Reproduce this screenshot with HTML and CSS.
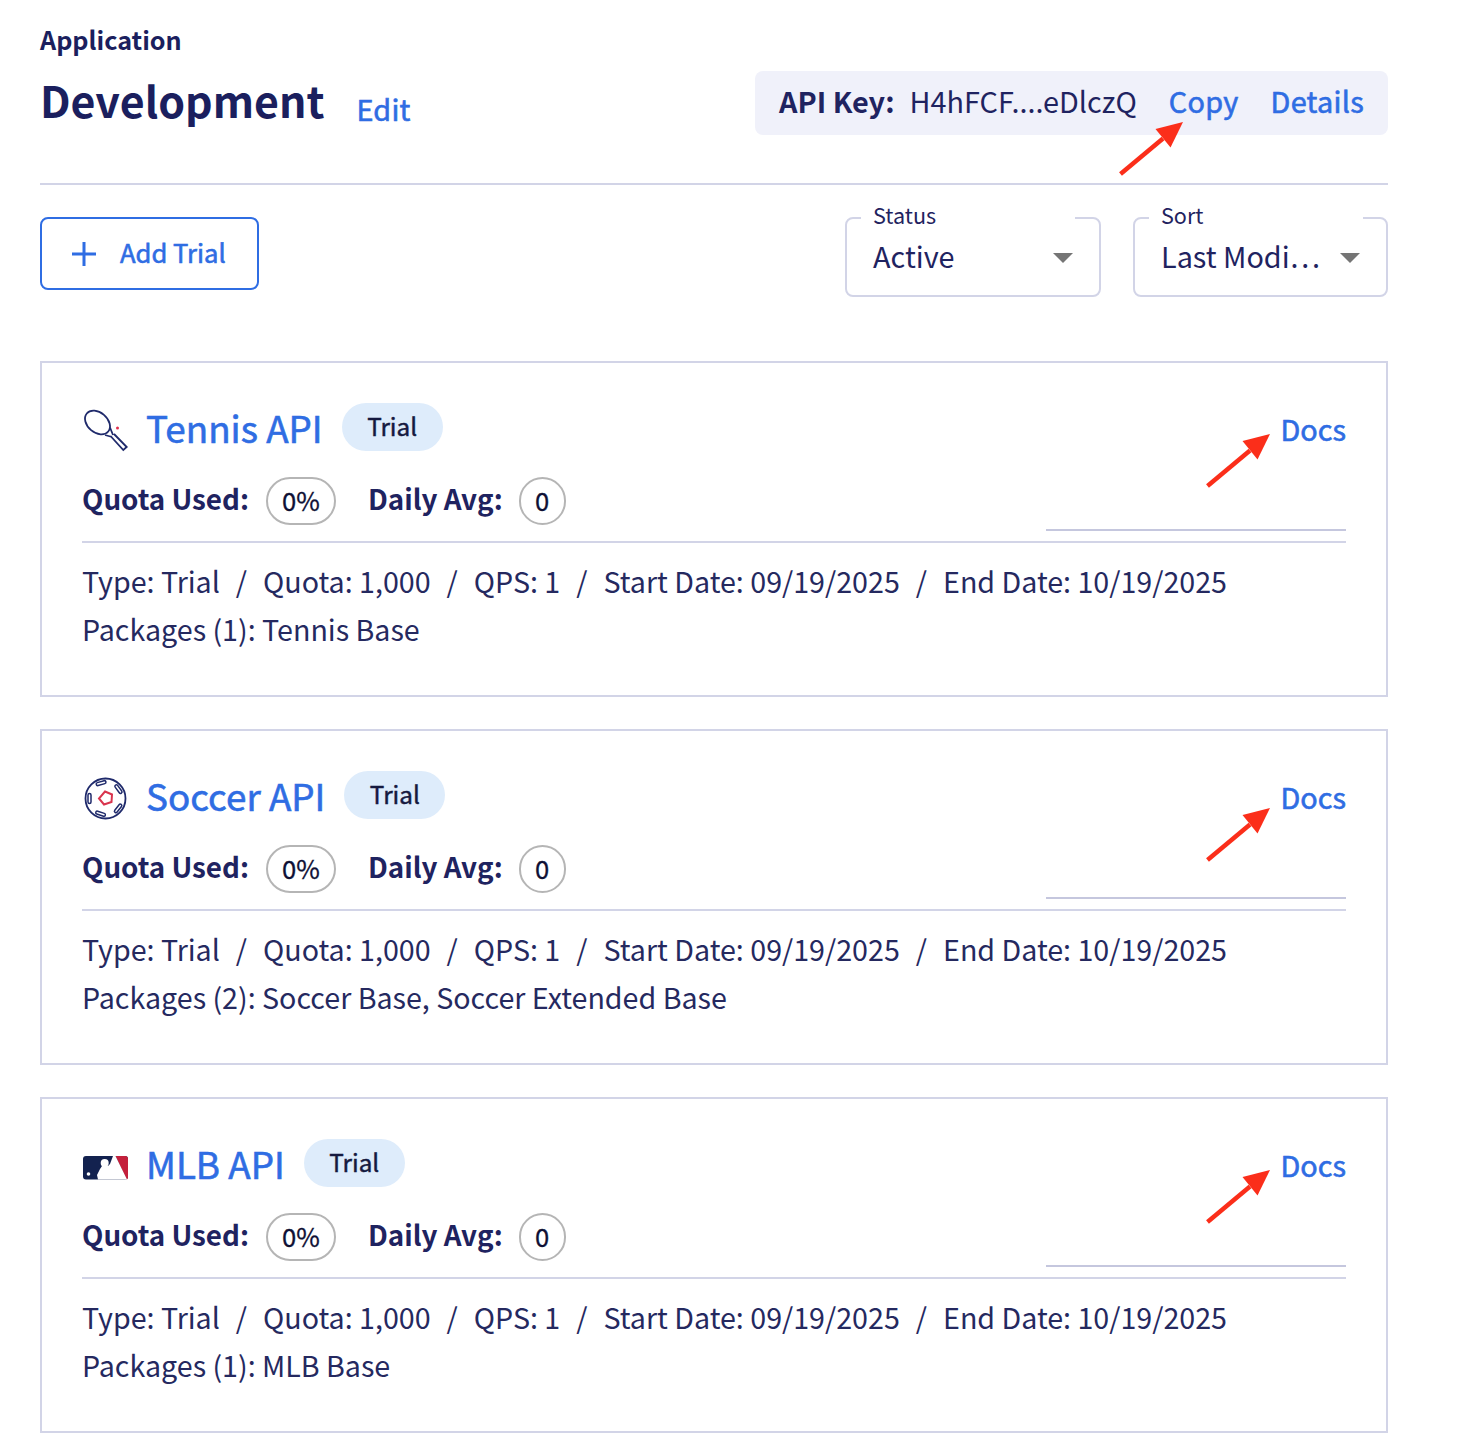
FILE: index.html
```html
<!DOCTYPE html>
<html lang="en">
<head>
<meta charset="utf-8">
<title>Application - Development</title>
<link rel="stylesheet" href="styles.css">
</head>
<body>
<main class="page">
  <header class="app-header">
    <div class="app-title">
      <div class="eyebrow">Application</div>
      <div class="name-row">
        <h1 class="app-name">Development</h1>
        <a class="edit-link">Edit</a>
      </div>
    </div>
    <div class="key-box">
      <span class="key-label">API Key:</span>
      <span class="key-value">H4hFCF....eDlczQ</span>
      <a class="key-link key-copy">Copy</a>
      <a class="key-link">Details</a>
      <svg class="arrow arrow-copy" width="70" height="60" viewBox="0 0 70 60"><path d="M3.5 56 L46 20.500" class="arrow-shaft"/><path d="M66 4 L38.500 11 L53.500 29.500 Z" class="arrow-head"/></svg>
    </div>
  </header>

  <section class="toolbar">
    <button class="add-btn">
      <svg width="26" height="26" viewBox="0 0 26 26"><path d="M13 1V25M1 13H25" class="plus"/></svg>
      <span>Add Trial</span>
    </button>
    <div class="filters">
      <div class="select select-status">
        <span class="select-label">Status</span>
        <span class="select-value">Active</span>
        <span class="caret"></span>
      </div>
      <div class="select select-sort">
        <span class="select-label">Sort</span>
        <span class="select-value">Last Modi…</span>
        <span class="caret"></span>
      </div>
    </div>
  </section>

  <section class="cards">
    <article class="card">
      <div class="card-head">
        <div class="card-main">
          <div class="title-row">
            <svg class="sport-icon" width="46" height="46" viewBox="0 0 46 46">
              <g transform="translate(0 3)">
                <g class="navy-line"><ellipse cx="15.500" cy="12.500" rx="14" ry="10" transform="rotate(40 15.500 12.500)"/><path d="M23 25 L30 27 M28 17.500 L31 25 M28.500 26 L41.300 40 L44.700 37 L32 24"/></g>
                <circle cx="35.500" cy="18" r="1.500" class="red-fill"/>
              </g>
            </svg>
            <a class="api-name">Tennis API</a>
            <span class="badge">Trial</span>
          </div>
          <div class="stats">
            <span class="stat-label">Quota Used:</span><span class="chip chip-pct">0%</span>
            <span class="stat-label stat-second">Daily Avg:</span><span class="chip chip-num">0</span>
          </div>
        </div>
        <div class="docs-col">
          <a class="docs">Docs</a>
          <svg class="arrow arrow-docs" width="70" height="60" viewBox="0 0 70 60"><path d="M3.500 56 L46 20.500" class="arrow-shaft"/><path d="M66 4 L38.500 11 L53.500 29.500 Z" class="arrow-head"/></svg>
        </div>
      </div>
      <div class="details">
        <p>Type: Trial<i>/</i>Quota: 1,000<i>/</i>QPS: 1<i>/</i>Start Date: 09/19/2025<i>/</i>End Date: 10/19/2025</p>
        <p>Packages (1): Tennis Base</p>
      </div>
    </article>

    <article class="card">
      <div class="card-head">
        <div class="card-main">
          <div class="title-row">
            <svg class="sport-icon" width="46" height="46" viewBox="0 0 46 46">
              <circle cx="23.500" cy="23.500" r="20" class="navy-line"/>
              <g class="navy-line panel">
                <rect x="14.500" y="-5" width="3" height="10" rx="1.500" transform="translate(23.500 23.500) rotate(-106)"/>
                <rect x="14.500" y="-5" width="3" height="10" rx="1.500" transform="translate(23.500 23.500) rotate(-36)"/>
                <rect x="14.500" y="-5" width="3" height="10" rx="1.500" transform="translate(23.500 23.500) rotate(38)"/>
                <rect x="14.500" y="-5" width="3" height="10" rx="1.500" transform="translate(23.500 23.500) rotate(108)"/>
                <rect x="14.500" y="-5" width="3" height="10" rx="1.500" transform="translate(23.500 23.500) rotate(180)"/>
              </g>
              <path d="M23 16.500 L30 19.500 L29.500 27 L22 29.500 L17 23.500 Z" class="red-line"/>
            </svg>
            <a class="api-name">Soccer API</a>
            <span class="badge">Trial</span>
          </div>
          <div class="stats">
            <span class="stat-label">Quota Used:</span><span class="chip chip-pct">0%</span>
            <span class="stat-label stat-second">Daily Avg:</span><span class="chip chip-num">0</span>
          </div>
        </div>
        <div class="docs-col">
          <a class="docs">Docs</a>
          <svg class="arrow arrow-docs arrow-low" width="70" height="60" viewBox="0 0 70 60"><path d="M3.500 56 L46 20.500" class="arrow-shaft"/><path d="M66 4 L38.500 11 L53.500 29.500 Z" class="arrow-head"/></svg>
        </div>
      </div>
      <div class="details">
        <p>Type: Trial<i>/</i>Quota: 1,000<i>/</i>QPS: 1<i>/</i>Start Date: 09/19/2025<i>/</i>End Date: 10/19/2025</p>
        <p>Packages (2): Soccer Base, Soccer Extended Base</p>
      </div>
    </article>

    <article class="card">
      <div class="card-head">
        <div class="card-main">
          <div class="title-row">
            <svg class="sport-icon" width="46" height="46" viewBox="0 0 46 46">
              <g transform="translate(1 13)">
                <rect width="45" height="23.500" rx="3" class="mlb-navy"/>
                <path d="M32.500 0 H42 Q45 0 45 3 V20.500 Q45 23 43.500 23.500 Z" class="mlb-red"/>
                <path d="M30 0 H32.500 L44 23.500 H15 L14 19 L17 13 L19 10 H25 L27 8 Z" class="mlb-white"/>
                <circle cx="21.700" cy="7" r="4" class="mlb-white"/>
                <circle cx="5.500" cy="18" r="1.800" class="mlb-white"/>
              </g>
            </svg>
            <a class="api-name">MLB API</a>
            <span class="badge">Trial</span>
          </div>
          <div class="stats">
            <span class="stat-label">Quota Used:</span><span class="chip chip-pct">0%</span>
            <span class="stat-label stat-second">Daily Avg:</span><span class="chip chip-num">0</span>
          </div>
        </div>
        <div class="docs-col">
          <a class="docs">Docs</a>
          <svg class="arrow arrow-docs" width="70" height="60" viewBox="0 0 70 60"><path d="M3.500 56 L46 20.500" class="arrow-shaft"/><path d="M66 4 L38.500 11 L53.500 29.500 Z" class="arrow-head"/></svg>
        </div>
      </div>
      <div class="details">
        <p>Type: Trial<i>/</i>Quota: 1,000<i>/</i>QPS: 1<i>/</i>Start Date: 09/19/2025<i>/</i>End Date: 10/19/2025</p>
        <p>Packages (1): MLB Base</p>
      </div>
    </article>
  </section>
</main>
</body>
</html>
```
FILE: styles.css
```css
* { box-sizing: border-box; }
html, body { margin: 0; padding: 0; background: #fff; }
body {
  font-family: "Noto Sans CJK JP", "Noto Sans", sans-serif;
  color: #1f2360;
}
a { color: #2f6de3; -webkit-text-stroke: 0.6px #2f6de3; }
.page { width: 1348px; margin-left: 40px; padding-top: 20px; }

.app-header {
  display: flex;
  justify-content: space-between;
  align-items: flex-start;
  height: 165px;
  border-bottom: 2px solid #d2d4e7;
}
.eyebrow { font-size: 25.200px; line-height: 38px; font-weight: 700; color: #1b1f5e; }
.name-row { display: flex; align-items: flex-start; margin-top: 9px; }
.app-name { margin: 0; font-size: 42.900px; line-height: 64px; font-weight: 700; color: #1b1f5e; }
.edit-link { margin: 22px 0 0 32px; font-size: 28.800px; line-height: 40px; letter-spacing: 0.25px; }

.key-box {
  position: relative;
  margin-top: 51px;
  width: 633px;
  height: 64px;
  padding: 0 24px 4px;
  display: flex;
  align-items: center;
  background: #f0f1fa;
  border-radius: 8px;
  font-size: 28.800px;
  line-height: 40px;
  white-space: nowrap;
}
.key-label { font-weight: 700; }
.key-value { margin-left: 15px; }
.key-link { margin-left: 32px; letter-spacing: 0.3px; }
.arrow { position: absolute; overflow: visible; }
.arrow-copy { left: 362px; top: 47px; }
.arrow-shaft { stroke: #fb2e1a; stroke-width: 4.500; fill: none; }
.arrow-head { fill: #fb2e1a; }

.toolbar {
  display: flex;
  justify-content: space-between;
  align-items: flex-start;
  margin-top: 32px;
}
.add-btn {
  width: 219px;
  height: 73px;
  display: flex;
  align-items: center;
  gap: 23px;
  padding: 0 0 5px 29px;
  background: #fff;
  border: 2px solid #2f6de3;
  border-radius: 8px;
  font-family: inherit;
  font-size: 25.600px;
  -webkit-text-stroke: 0.6px #2f6de3;
  color: #2f6de3;
}
.add-btn svg { margin-top: 5px; }
.plus { stroke: #2f6de3; stroke-width: 3; fill: none; }
.filters { display: flex; gap: 32px; }
.select {
  position: relative;
  height: 80px;
  border: 2px solid #d2d4e7;
  border-radius: 8px;
  padding: 17px 0 0 26px;
}
.select-status { width: 256px; }
.select-sort { width: 255px; }
.select-label {
  position: absolute;
  left: 14px;
  top: -16px;
  width: 214px;
  padding-left: 12px;
  font-size: 21.600px;
  line-height: 24px;
  background: linear-gradient(#fff 0 16px, transparent 16px);
}
.select-value { font-size: 28.800px; line-height: 40px; display: block; }
.caret {
  position: absolute;
  right: 26px;
  top: 34px;
  border-left: 10px solid transparent;
  border-right: 10px solid transparent;
  border-top: 10px solid #757575;
}

.cards { display: flex; flex-direction: column; gap: 32px; margin-top: 64px; }
.card {
  height: 336px;
  border: 2px solid #d2d4e7;
  padding: 40px 40px 0;
}
.card-head {
  display: flex;
  justify-content: space-between;
  height: 140px;
  border-bottom: 2px solid #d2d4e7;
}
.title-row { display: flex; height: 48px; align-items: flex-start; }
.sport-icon { margin-top: 4px; flex: none; }
.navy-line { fill: none; stroke: #1f2a6b; stroke-width: 1.800; }
.navy-line.panel { fill: #fff; stroke-width: 1.500; }
.red-line { fill: none; stroke: #d9344d; stroke-width: 2; }
.red-fill { fill: #e2304d; }
.mlb-navy { fill: #13224f; }
.mlb-red { fill: #c4203c; }
.mlb-white { fill: #fff; }
.api-name { margin: -1px 19px 0 18px; font-size: 36.800px; line-height: 50px; white-space: nowrap; }
.badge {
  width: 101px;
  height: 48px;
  border-radius: 24px;
  background: #deecfb;
  color: #15193f;
  font-size: 24.300px;
  -webkit-text-stroke: 0.45px #15193f;
  line-height: 46px;
  text-align: center;
}
.stats { display: flex; align-items: center; margin-top: 26px; height: 48px; }
.stat-label { font-size: 27.800px; font-weight: 700; line-height: 40px; padding-bottom: 6px; }
.stat-second { margin-left: 32px; }
.chip {
  height: 48px;
  margin-left: 17px;
  border: 2px solid #b5b5b5;
  border-radius: 24px;
  text-align: center;
  font-size: 25.600px;
  line-height: 41px;
  color: #0e1035;
  -webkit-text-stroke: 0.3px #0e1035;
}
.chip-pct { width: 70px; }
.chip-num { width: 47px; margin-left: 16px; }
.docs-col {
  position: relative;
  width: 300px;
  height: 128px;
  border-bottom: 2px solid #c5c7de;
  text-align: right;
}
.docs { font-size: 28.800px; line-height: 52px; }
.arrow-docs { left: 158px; top: 27px; }
.arrow-low { top: 33px; }

.details { padding-top: 14px; }
.details p { margin: 0; font-size: 28.640px; line-height: 48px; color: #25295f; white-space: nowrap; }
.details i { font-style: normal; margin: 0 16px; }
```
